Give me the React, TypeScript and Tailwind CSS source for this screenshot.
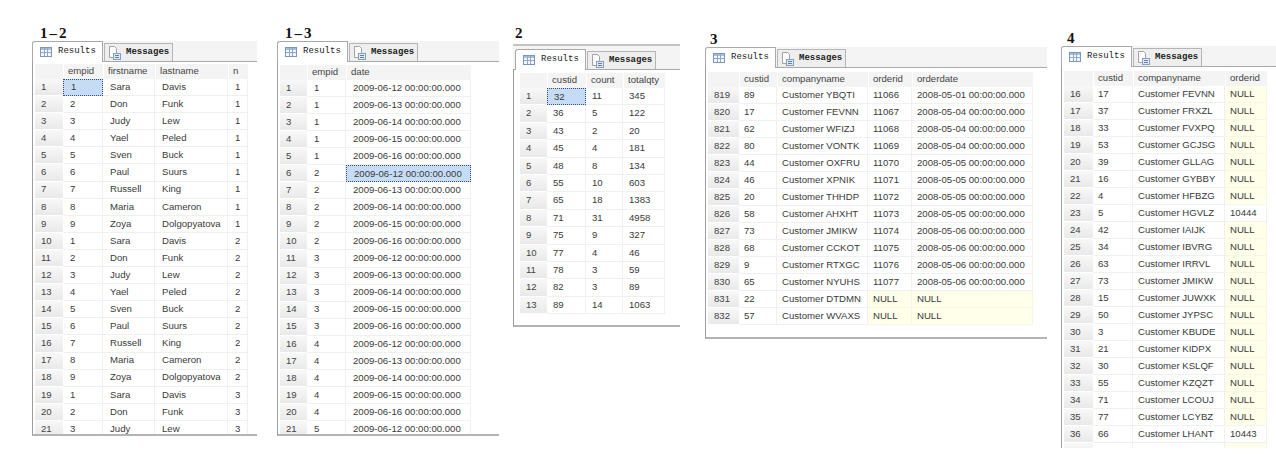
type PanelProps = {
  title: string;
  className: string;
  titleClassName: string;
  stripClassName: string;
  bodyClassName: string;
  rowClassName: string;
  cellClassName: string;
  headerWidth: string;
  columns: { name: string; width: string }[];
  rows: { id: string; cells: string[] }[];
  selected?: [number, number];
};

const people = [
  ["Sara", "Davis"],
  ["Don", "Funk"],
  ["Judy", "Lew"],
  ["Yael", "Peled"],
  ["Sven", "Buck"],
  ["Paul", "Suurs"],
  ["Russell", "King"],
  ["Maria", "Cameron"],
  ["Zoya", "Dolgopyatova"],
];

const employeeRows = Array.from({ length: 21 }, (_, i) => {
  const p = people[i % 9];
  return {
    id: String(i + 1),
    cells: [String((i % 9) + 1), p[0], p[1], String(Math.floor(i / 9) + 1)],
  };
});

const dateRows = Array.from({ length: 21 }, (_, i) => ({
  id: String(i + 1),
  cells: [
    String(Math.floor(i / 5) + 1),
    `2009-06-${12 + (i % 5)} 00:00:00.000`,
  ],
}));

const countRows = [
  ["32", "11", "345"],
  ["36", "5", "122"],
  ["43", "2", "20"],
  ["45", "4", "181"],
  ["48", "8", "134"],
  ["55", "10", "603"],
  ["65", "18", "1383"],
  ["71", "31", "4958"],
  ["75", "9", "327"],
  ["77", "4", "46"],
  ["78", "3", "59"],
  ["82", "3", "89"],
  ["89", "14", "1063"],
].map((cells, i) => ({ id: String(i + 1), cells }));

const orderRows = [
  ["89", "Customer YBQTI", "11066", "2008-05-01 00:00:00.000"],
  ["17", "Customer FEVNN", "11067", "2008-05-04 00:00:00.000"],
  ["62", "Customer WFIZJ", "11068", "2008-05-04 00:00:00.000"],
  ["80", "Customer VONTK", "11069", "2008-05-04 00:00:00.000"],
  ["44", "Customer OXFRU", "11070", "2008-05-05 00:00:00.000"],
  ["46", "Customer XPNIK", "11071", "2008-05-05 00:00:00.000"],
  ["20", "Customer THHDP", "11072", "2008-05-05 00:00:00.000"],
  ["58", "Customer AHXHT", "11073", "2008-05-05 00:00:00.000"],
  ["73", "Customer JMIKW", "11074", "2008-05-06 00:00:00.000"],
  ["68", "Customer CCKOT", "11075", "2008-05-06 00:00:00.000"],
  ["9", "Customer RTXGC", "11076", "2008-05-06 00:00:00.000"],
  ["65", "Customer NYUHS", "11077", "2008-05-06 00:00:00.000"],
  ["22", "Customer DTDMN", "NULL", "NULL"],
  ["57", "Customer WVAXS", "NULL", "NULL"],
].map((cells, i) => ({ id: String(i + 819), cells }));

const nullRows = [
  ["17", "Customer FEVNN", "NULL"],
  ["37", "Customer FRXZL", "NULL"],
  ["33", "Customer FVXPQ", "NULL"],
  ["53", "Customer GCJSG", "NULL"],
  ["39", "Customer GLLAG", "NULL"],
  ["16", "Customer GYBBY", "NULL"],
  ["4", "Customer HFBZG", "NULL"],
  ["5", "Customer HGVLZ", "10444"],
  ["42", "Customer IAIJK", "NULL"],
  ["34", "Customer IBVRG", "NULL"],
  ["63", "Customer IRRVL", "NULL"],
  ["73", "Customer JMIKW", "NULL"],
  ["15", "Customer JUWXK", "NULL"],
  ["50", "Customer JYPSC", "NULL"],
  ["3", "Customer KBUDE", "NULL"],
  ["21", "Customer KIDPX", "NULL"],
  ["30", "Customer KSLQF", "NULL"],
  ["55", "Customer KZQZT", "NULL"],
  ["71", "Customer LCOUJ", "NULL"],
  ["77", "Customer LCYBZ", "NULL"],
  ["66", "Customer LHANT", "10443"],
  ["38", "Customer LJUCA", "NULL"],
].map((cells, i) => ({ id: String(i + 16), cells }));

function GridIcon() {
  return (
    <svg width="12" height="10" viewBox="0 0 12 10" className="shrink-0">
      <rect x="0.5" y="0.5" width="11" height="9" fill="#f4f8fc" stroke="#7c97bb" />
      <rect x="1" y="1" width="10" height="2" fill="#a5bedd" />
      <path d="M4.5 1v8M7.5 1v8M1 5.5h10" stroke="#8fa9cc" strokeWidth="1" />
    </svg>
  );
}

function MessagesIcon() {
  return (
    <svg width="13" height="14" viewBox="0 0 13 14" className="shrink-0">
      <path d="M1.5 0.5h5l2 2v9h-7z" fill="#fbfbfb" stroke="#a3a3a3" />
      <rect x="5.5" y="7.5" width="7" height="6" fill="#dfe9f5" stroke="#86a0c2" />
      <path d="M7 9.5h4M7 11.5h4" stroke="#5f7fa6" />
    </svg>
  );
}

function Panel({
  title,
  className,
  titleClassName,
  stripClassName,
  bodyClassName,
  rowClassName,
  cellClassName,
  headerWidth,
  columns,
  rows,
  selected,
}: PanelProps) {
  return (
    <section className={`flex shrink-0 flex-col ${className}`}>
      <h2
        className={`font-['Liberation_Serif',serif] text-[15px] leading-[15px] font-bold tracking-[2px] text-[#111] ${titleClassName}`}
      >
        {title}
      </h2>
      <div
        className={`flex items-end gap-px border-b border-[#a9a9a9] bg-[#f4f4f4] font-['Liberation_Mono',monospace] text-[9px] text-[#222] ${stripClassName}`}
      >
        <div className="-mb-px flex h-[21px] w-[71px] items-center gap-[6px] rounded-tl-[3px] border border-b-0 border-[#a9a9a9] bg-white pl-[7px]">
          <GridIcon />
          <span>Results</span>
        </div>
        <div className="flex h-[18px] w-[69px] items-center gap-[5px] border border-b-0 border-[#b5b5b5] bg-[#eeeeee] pl-[3px]">
          <MessagesIcon />
          <span className="font-bold">Messages</span>
        </div>
      </div>
      <div
        className={`overflow-hidden border-l border-l-[#9c9c9c] font-['Liberation_Sans',sans-serif] text-[9.6px] text-[#3a3a3a] ${bodyClassName}`}
      >
        <div className="flex h-[15px] items-center text-[#444]">
          <div className={`h-full shrink-0 bg-[#f4f4f4] ${headerWidth}`} />
          {columns.map((c) => (
            <div
              key={c.name}
              className={`flex h-full shrink-0 items-center border-l border-white bg-[#f4f4f4] pl-[4px] ${c.width}`}
            >
              {c.name}
            </div>
          ))}
        </div>
        {rows.map((row, r) => (
          <div key={row.id} className={`flex ${rowClassName}`}>
            <div
              className={`flex h-full shrink-0 items-center border-b border-white bg-gradient-to-b from-[#f8f8f8] to-[#e9e9e9] pl-[6px] text-[#444] ${headerWidth}`}
            >
              {row.id}
            </div>
            {row.cells.map((cell, c) => {
              const isSelected = selected && selected[0] === r && selected[1] === c;
              const isNull = cell === "NULL";
              return (
                <div
                  key={c}
                  className={`flex h-full shrink-0 items-center border-r border-b ${cellClassName} ${columns[c].width} ${
                    isSelected
                      ? "border border-dotted border-[#33507a] bg-[#c6dcf5]"
                      : isNull
                        ? "border-[#f5f5e8] bg-[#ffffea]"
                        : "border-[#f0f0f0] bg-white"
                  }`}
                >
                  {cell}
                </div>
              );
            })}
          </div>
        ))}
      </div>
    </section>
  );
}

export default function App() {
  return (
    <div className="flex h-[460px] w-[1276px] items-start overflow-hidden bg-white pl-[32px]">
      <Panel
        title="1–2"
        className="mt-[26px] w-[225px]"
        titleClassName="pl-[8px]"
        stripClassName="h-[21px]"
        bodyClassName="h-[374px] border-b-2 border-b-[#b4b4b4] pt-[2px] pl-[2px]"
        rowClassName="h-[17.1px]"
        cellClassName="pl-[7px]"
        headerWidth="w-[28px]"
        columns={[
          { name: "empid", width: "w-[40px]" },
          { name: "firstname", width: "w-[52px]" },
          { name: "lastname", width: "w-[73px]" },
          { name: "n", width: "w-[20px]" },
        ]}
        rows={employeeRows}
        selected={[0, 0]}
      />
      <Panel
        title="1–3"
        className="mt-[26px] ml-[20px] w-[222px]"
        titleClassName="pl-[8px]"
        stripClassName="h-[21px]"
        bodyClassName="h-[374px] border-b-2 border-b-[#b4b4b4] pt-[3px] pl-[2px]"
        rowClassName="h-[17.05px]"
        cellClassName="pl-[7px]"
        headerWidth="w-[27px]"
        columns={[
          { name: "empid", width: "w-[39px]" },
          { name: "date", width: "w-[125px]" },
        ]}
        rows={dateRows}
        selected={[5, 1]}
      />
      <Panel
        title="2"
        className="mt-[26px] ml-[14px] w-[167px]"
        titleClassName="pb-[3px] pl-[2px]"
        stripClassName="h-[26px] border-t-2 border-t-[#c4c4c4] pl-[2px]"
        bodyClassName="h-[257px] border-b-2 border-b-[#b4b4b4] pt-[3px] pl-[6px]"
        rowClassName="h-[17.4px]"
        cellClassName="pl-[6px]"
        headerWidth="w-[27px]"
        columns={[
          { name: "custid", width: "w-[39px]" },
          { name: "count", width: "w-[37px]" },
          { name: "totalqty", width: "w-[42px]" },
        ]}
        rows={countRows}
        selected={[0, 0]}
      />
      <Panel
        title="3"
        className="mt-[32px] ml-[25px] w-[342px]"
        titleClassName="pl-[5px]"
        stripClassName="h-[21px]"
        bodyClassName="h-[271px] border-b-2 border-b-[#b4b4b4] pt-[4px] pl-[2px]"
        rowClassName="h-[17px]"
        cellClassName="pl-[5px]"
        headerWidth="w-[31px]"
        columns={[
          { name: "custid", width: "w-[38px]" },
          { name: "companyname", width: "w-[91px]" },
          { name: "orderid", width: "w-[44px]" },
          { name: "orderdate", width: "w-[121px]" },
        ]}
        rows={orderRows}
      />
      <Panel
        title="4"
        className="mt-[31px] ml-[14px] w-[215px]"
        titleClassName="pl-[6px]"
        stripClassName="h-[21px]"
        bodyClassName="h-[381px] pt-[4px] pl-[2px]"
        rowClassName="h-[17px]"
        cellClassName="pl-[5px]"
        headerWidth="w-[29px]"
        columns={[
          { name: "custid", width: "w-[40px]" },
          { name: "companyname", width: "w-[92px]" },
          { name: "orderid", width: "w-[42px]" },
        ]}
        rows={nullRows}
      />
    </div>
  );
}
